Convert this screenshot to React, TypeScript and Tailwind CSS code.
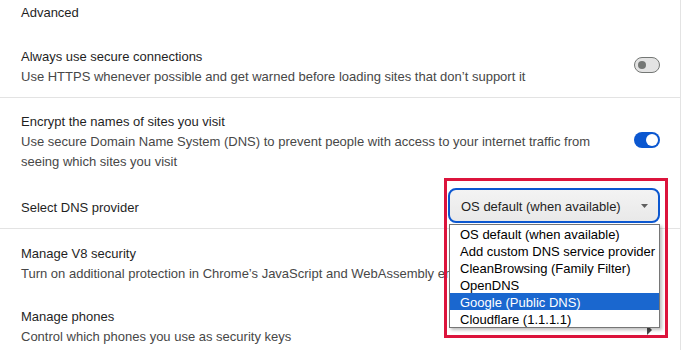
import React from "react";

const FONT = { fontFamily: '"Liberation Sans", Arial, sans-serif' };

function ToggleOff() {
  return (
    <div className="shrink-0 mb-[3px] w-[26px] h-[16px] rounded-full border border-[#747775] bg-[#e3e3e3] flex items-center pl-[3px]">
      <div className="w-[8px] h-[8px] rounded-full bg-[#747775]" />
    </div>
  );
}

function ToggleOn() {
  return (
    <div className="shrink-0 mb-[2px] w-[26px] h-[16px] rounded-full bg-[#0b57d0] flex items-center justify-end pr-[2px]">
      <div className="w-[12px] h-[12px] rounded-full bg-white" />
    </div>
  );
}

const options = [
  "OS default (when available)",
  "Add custom DNS service provider",
  "CleanBrowsing (Family Filter)",
  "OpenDNS",
  "Google (Public DNS)",
  "Cloudflare (1.1.1.1)",
];

export default function App() {
  return (
    <div
      className="relative w-[681px] h-[350px] overflow-hidden bg-white border-r border-[#e3e3e3] text-[13px] leading-[20px] text-[#1f1f1f]"
      style={FONT}
    >
      <div className="pl-[21px] h-[20px] pt-[3px] mb-[13px]">Advanced</div>

      <div className="flex items-center pl-[21px] pr-[20px] pt-[12px] pb-[10px]">
        <div className="flex-1 pt-[2px]">
          <div>Always use secure connections</div>
          <div className="text-[#474747]">
            Use HTTPS whenever possible and get warned before loading sites that don’t support it
          </div>
        </div>
        <ToggleOff />
      </div>

      <div className="border-t border-[#e3e3e3] flex items-center pl-[21px] pr-[20px] pt-[12px] pb-[10px]">
        <div className="flex-1 pt-[2px]">
          <div>Encrypt the names of sites you visit</div>
          <div className="text-[#474747]">
            Use secure Domain Name System (DNS) to prevent people with access to your internet traffic from
            <br />
            seeing which sites you visit
          </div>
        </div>
        <ToggleOn />
      </div>

      <div className="flex items-center pl-[21px] pr-[20px] pt-[6px] pb-[5px]">
        <div className="flex-1 pt-[4px]">Select DNS provider</div>
        <div className="w-[212px] h-[35px] rounded-[8px] border-2 border-[#0b57d0] bg-gradient-to-b from-[#f3f3f3] to-[#e9e9e9] flex items-center pl-[11px] pr-[10px]">
          <span className="flex-1 pt-[2px]">OS default (when available)</span>
          <svg width="7" height="4" viewBox="0 0 7 4">
            <path d="M0 0 L7 0 L3.5 4 Z" fill="#5f5f5f" />
          </svg>
        </div>
      </div>

      <div className="border-t border-[#e3e3e3] flex items-center pl-[21px] pr-[20px] pt-[13px] pb-[10px]">
        <div className="flex-1 whitespace-nowrap pt-[2px]">
          <div>Manage V8 security</div>
          <div className="text-[#474747]">
            Turn on additional protection in Chrome’s JavaScript and WebAssembly engine
          </div>
        </div>
        <svg width="8" height="10" viewBox="0 0 8 10" className="shrink-0 mr-[6px]">
          <path d="M1 0 L6 5 L1 10 Z" fill="#474747" />
        </svg>
      </div>

      <div className="flex items-center pl-[21px] pr-[20px] pt-[11px] pb-[10px]">
        <div className="flex-1 pt-[2px]">
          <div>Manage phones</div>
          <div className="text-[#474747]">Control which phones you use as security keys</div>
        </div>
        <svg width="8" height="10" viewBox="0 0 8 10" className="shrink-0 mr-[6px] mt-[8px]">
          <path d="M1 0 L6 5 L1 10 Z" fill="#474747" />
        </svg>
      </div>

      {/* native select popup */}
      <div className="absolute left-[449px] top-[224px] w-[211px] bg-white border border-[#767676] shadow-[2px_2px_3px_rgba(0,0,0,0.25)] text-black">
        {options.map((o) => (
          <div
            key={o}
            className={
              o === "Google (Public DNS)"
                ? "h-[17px] pt-[2px] leading-[15px] pl-[10px] bg-[#1a67cf] text-white whitespace-nowrap"
                : "h-[17px] pt-[2px] leading-[15px] pl-[10px] whitespace-nowrap"
            }
          >
            {o}
          </div>
        ))}
      </div>

      {/* annotation frame */}
      <div className="absolute left-[444px] top-[178px] w-[224px] h-[160px] border-[3px] border-[#dc143c] pointer-events-none" />
    </div>
  );
}
